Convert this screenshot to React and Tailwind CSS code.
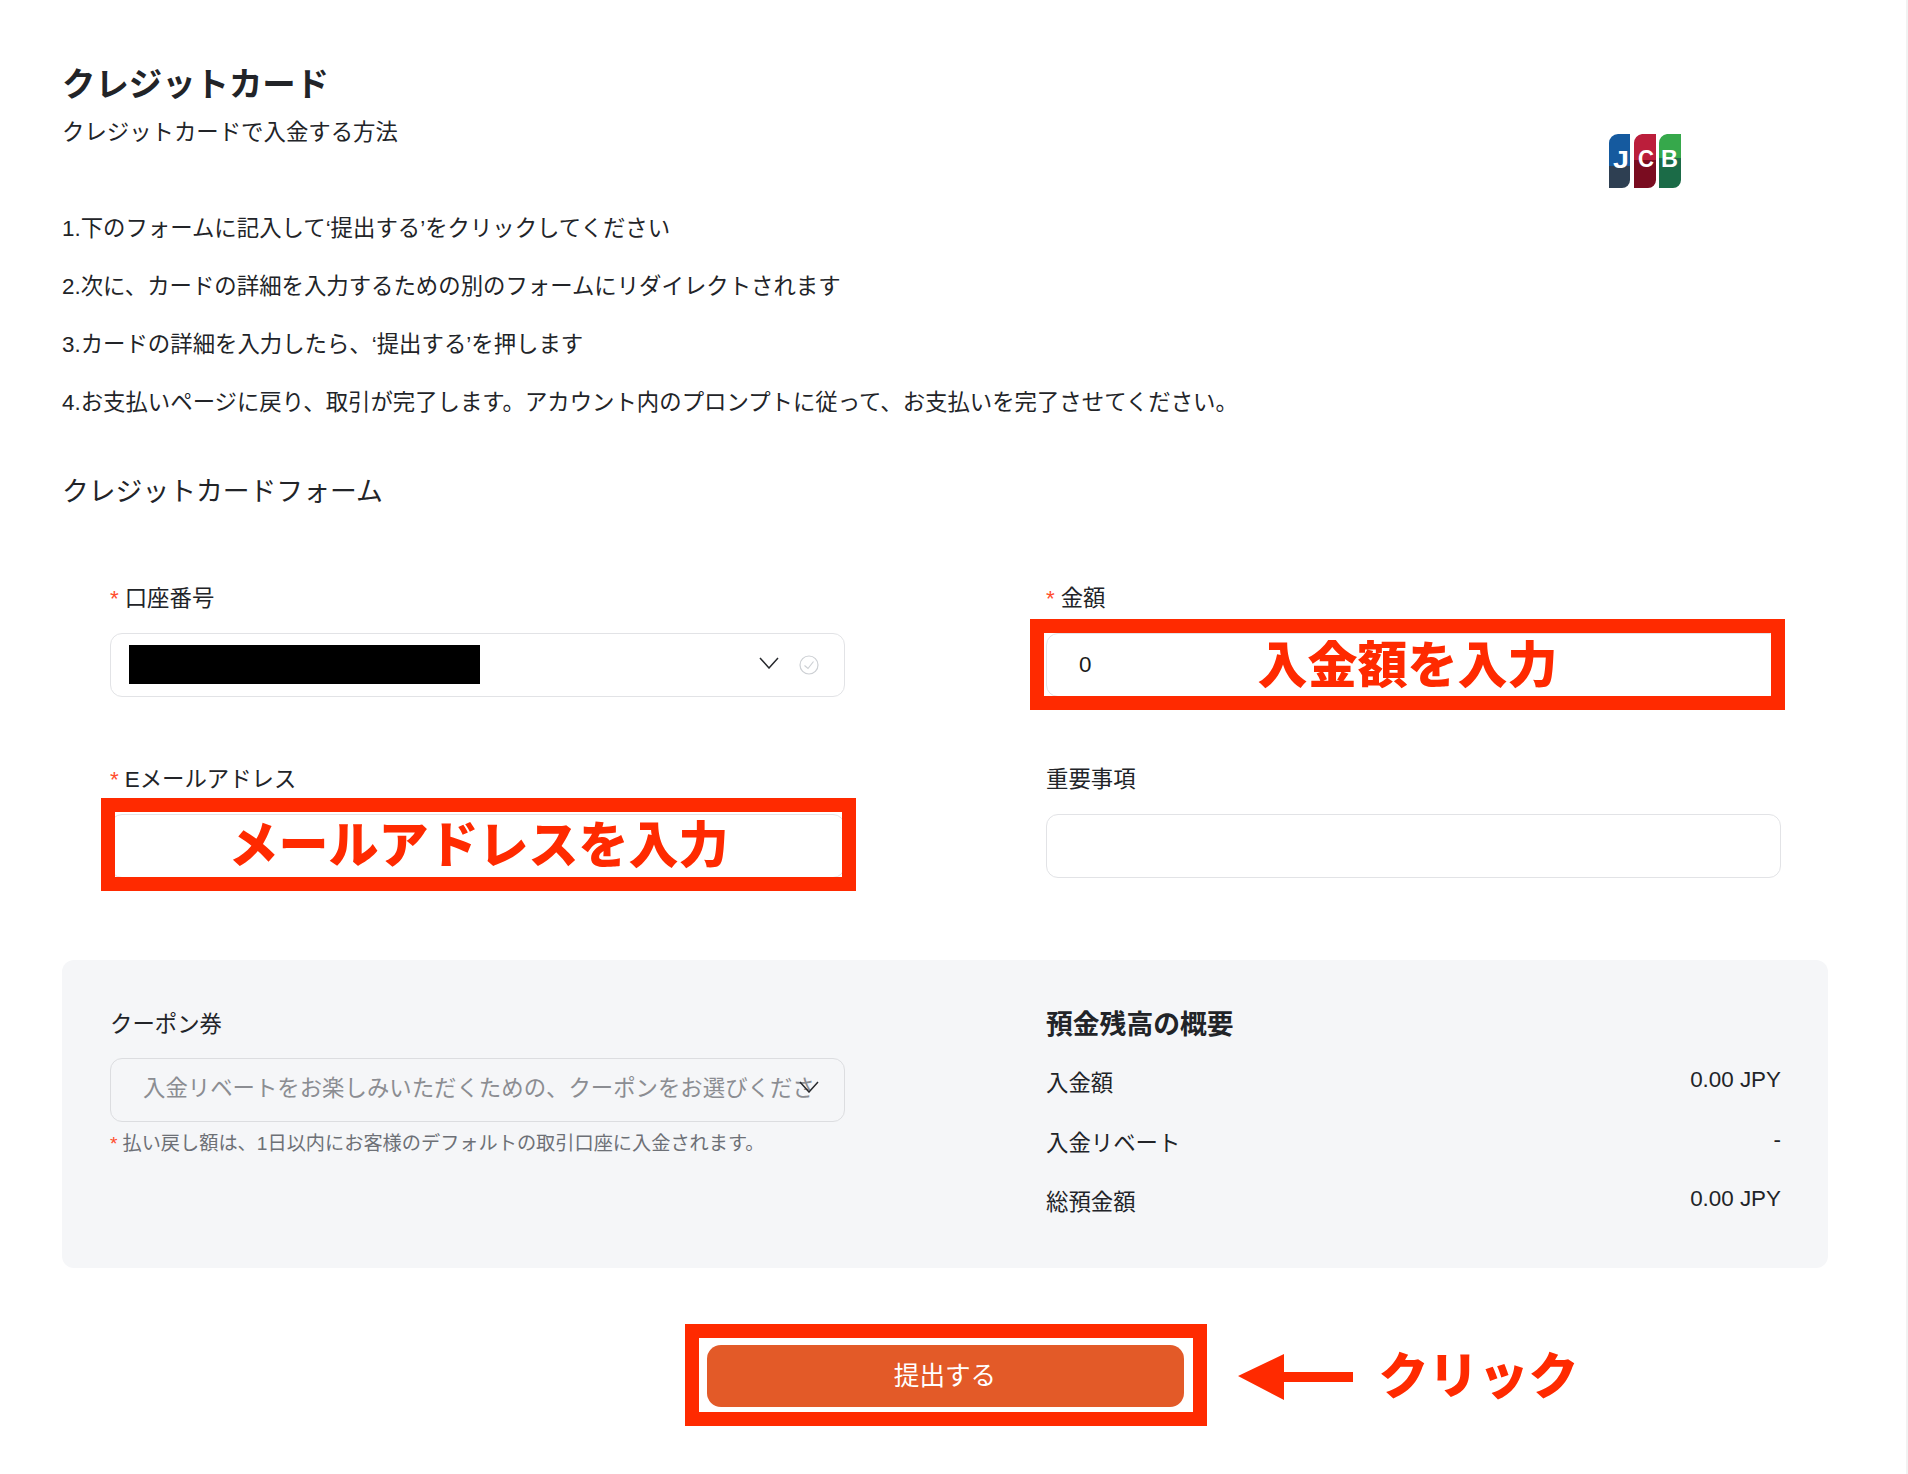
import React from 'react';

const Star = () => <span className="text-[#ff4d2e] mr-[6px]">*</span>;

const Chevron = () => (
  <svg width="20" height="12" viewBox="0 0 20 12" fill="none" stroke="#26282c" strokeWidth="1.5">
    <polyline points="1,1 10,11 19,1" />
  </svg>
);

const CheckCircle = () => (
  <svg width="20" height="20" viewBox="0 0 20 20" fill="none" stroke="#cdd0d4" strokeWidth="1.2">
    <circle cx="10" cy="10" r="9" />
    <polyline points="5.5,10.5 9,13.5 14.5,6.5" />
  </svg>
);

const JcbLogo = () => (
  <svg width="74" height="54" viewBox="-1 0 74 54">
    <defs>
      <clipPath id="jcb-a"><path d="M9 0H21V46a8 8 0 0 1-8 8H0V9a9 9 0 0 1 9-9Z" /></clipPath>
      <clipPath id="jcb-b"><path d="M33 0H47V46a8 8 0 0 1-8 8H25V9a9 9 0 0 1 8-9Z" /></clipPath>
      <clipPath id="jcb-c"><path d="M58 0H72V46a8 8 0 0 1-8 8H50V9a9 9 0 0 1 8-9Z" /></clipPath>
    </defs>
    <g clipPath="url(#jcb-a)">
      <rect x="-1" width="23" height="32" fill="#155a9f" />
      <rect x="-1" y="32" width="23" height="22" fill="#2e3f52" />
    </g>
    <g clipPath="url(#jcb-b)">
      <rect x="24" width="24" height="26" fill="#bb1e3b" />
      <rect x="24" y="26" width="24" height="28" fill="#7a0c20" />
    </g>
    <g clipPath="url(#jcb-c)">
      <rect x="49" width="24" height="24" fill="#36a84b" />
      <rect x="49" y="24" width="24" height="30" fill="#1b6b47" />
    </g>
    <g fontFamily="Liberation Sans, sans-serif" fontWeight="700" fontSize="23" fill="#fff">
      <text x="4" y="34" textLength="16" lengthAdjust="spacingAndGlyphs">J</text>
      <text x="29" y="33" textLength="16" lengthAdjust="spacingAndGlyphs">C</text>
      <text x="52" y="33" textLength="17" lengthAdjust="spacingAndGlyphs">B</text>
    </g>
  </svg>
);

const Field = ({ label, required, children }) => (
  <div className="w-[735px]">
    <div className="h-[30px] leading-[30px] mb-[19px]">
      {required && <Star />}
      {label}
    </div>
    {children}
  </div>
);

const Input = ({ children }) => (
  <div className="relative h-[64px] rounded-[12px] border border-[#e2e3e6] bg-white flex items-center">
    {children}
  </div>
);

const steps = [
  '1.下のフォームに記入して‘提出する’をクリックしてください',
  '2.次に、カードの詳細を入力するための別のフォームにリダイレクトされます',
  '3.カードの詳細を入力したら、‘提出する’を押します',
  '4.お支払いページに戻り、取引が完了します。アカウント内のプロンプトに従って、お支払いを完了させてください。',
];

const summary = [
  ['入金額', '0.00 JPY'],
  ['入金リベート', '-'],
  ['総預金額', '0.00 JPY'],
];

export default function App() {
  return (
    <div className="relative min-h-[1474px] bg-white pt-[63px] pl-[62px] pr-[80px] text-[22.4px] text-[#222428] font-['Liberation_Sans','Noto_Sans_CJK_JP',sans-serif]">
      <div className="absolute top-0 right-0 bottom-0 w-[2px] bg-[#f2f2f2]" />

      <div className="relative">
        <h1 className="text-[33.4px] leading-[44px] font-bold">クレジットカード</h1>
        <p className="mt-[11px] leading-[30px]">クレジットカードで入金する方法</p>
        <div className="absolute left-[1546px] top-[71px]">
          <JcbLogo />
        </div>
      </div>

      <div className="mt-[66px] flex flex-col gap-[28px]">
        {steps.map((s) => (
          <p key={s} className="leading-[30px]">{s}</p>
        ))}
      </div>

      <h2 className="mt-[56px] text-[26.8px] leading-[36px]">クレジットカードフォーム</h2>

      <div className="mt-[74px] pl-[48px] grid grid-cols-[735px_735px] gap-x-[201px] gap-y-[68px]">
        <Field label="口座番号" required>
          <Input>
            <div className="ml-[18px] mb-[1px] w-[351px] h-[39px] bg-black" />
            <div className="ml-auto mr-[25px] flex items-center gap-[20px]">
              <div className="mb-[4px] flex">
                <Chevron />
              </div>
              <CheckCircle />
            </div>
          </Input>
        </Field>

        <Field label="金額" required>
          <Input>
            <span className="ml-[32px] mb-[1px] text-[#1a1a1a]">0</span>
            <div className="absolute -left-[17px] -right-[5px] -top-[15px] -bottom-[14px] border-[14px] border-[#ff2a00] flex items-center justify-center">
              <span className="mt-[3px] text-[50px] font-black leading-none text-[#ff2a00]">入金額を入力</span>
            </div>
          </Input>
        </Field>

        <Field label="Eメールアドレス" required>
          <Input>
            <div className="absolute -left-[10px] -right-[12px] -top-[17px] -bottom-[14px] border-[14px] border-[#ff2a00] flex items-center justify-center">
              <span className="mt-[3px] text-[50px] font-black leading-none text-[#ff2a00]">メールアドレスを入力</span>
            </div>
          </Input>
        </Field>

        <Field label="重要事項">
          <Input />
        </Field>
      </div>

      <div className="mt-[82px] h-[308px] rounded-[12px] bg-[#f5f6f8] pt-[50px] pl-[48px] grid grid-cols-[735px_735px] gap-x-[201px] content-start">
        <div>
          <div className="h-[30px] leading-[30px] mb-[18px]">クーポン券</div>
          <div className="relative h-[64px] rounded-[12px] border border-[#dcdde0] flex items-center pl-[32px] pr-[28px] pb-[2px]">
            <span className="overflow-hidden whitespace-nowrap text-[#8b8d92]">
              入金リベートをお楽しみいただくための、クーポンをお選びください
            </span>
            <div className="absolute right-[25px] top-[22px] flex">
              <Chevron />
            </div>
          </div>
          <p className="mt-[9px] text-[19.2px] leading-[26px] text-[#6d7076]">
            <span className="text-[#ff4d2e] mr-[5px]">*</span>
            払い戻し額は、1日以内にお客様のデフォルトの取引口座に入金されます。
          </p>
        </div>

        <div>
          <h3 className="h-[30px] leading-[30px] text-[26.8px] font-bold">預金残高の概要</h3>
          <div className="mt-[29px] flex flex-col gap-[29.5px]">
            {summary.map(([label, value]) => (
              <div key={label} className="flex items-start justify-between h-[30px]">
                <span className="leading-[30px]">{label}</span>
                <span className="leading-[22px]">{value}</span>
              </div>
            ))}
          </div>
        </div>
      </div>

      <div className="mt-[77px] flex justify-center">
        <div className="relative w-[477px]">
          <button className="w-full h-[62px] rounded-[14px] bg-[#e35a28] text-white text-[25.6px]">提出する</button>
          <div className="absolute -left-[22px] -right-[23px] -top-[21px] -bottom-[19px] border-[14px] border-[#ff2a00] pointer-events-none" />
          <div className="absolute left-[531px] top-[7px] flex items-center whitespace-nowrap">
            <svg width="115" height="46" viewBox="0 0 115 46">
              <polygon points="0,22 46,0 46,18 115,18 115,28 46,28 46,46" fill="#ff2a00" />
            </svg>
            <span className="ml-[26px] text-[50px] font-black leading-none text-[#ff2a00]">クリック</span>
          </div>
        </div>
      </div>
    </div>
  );
}
